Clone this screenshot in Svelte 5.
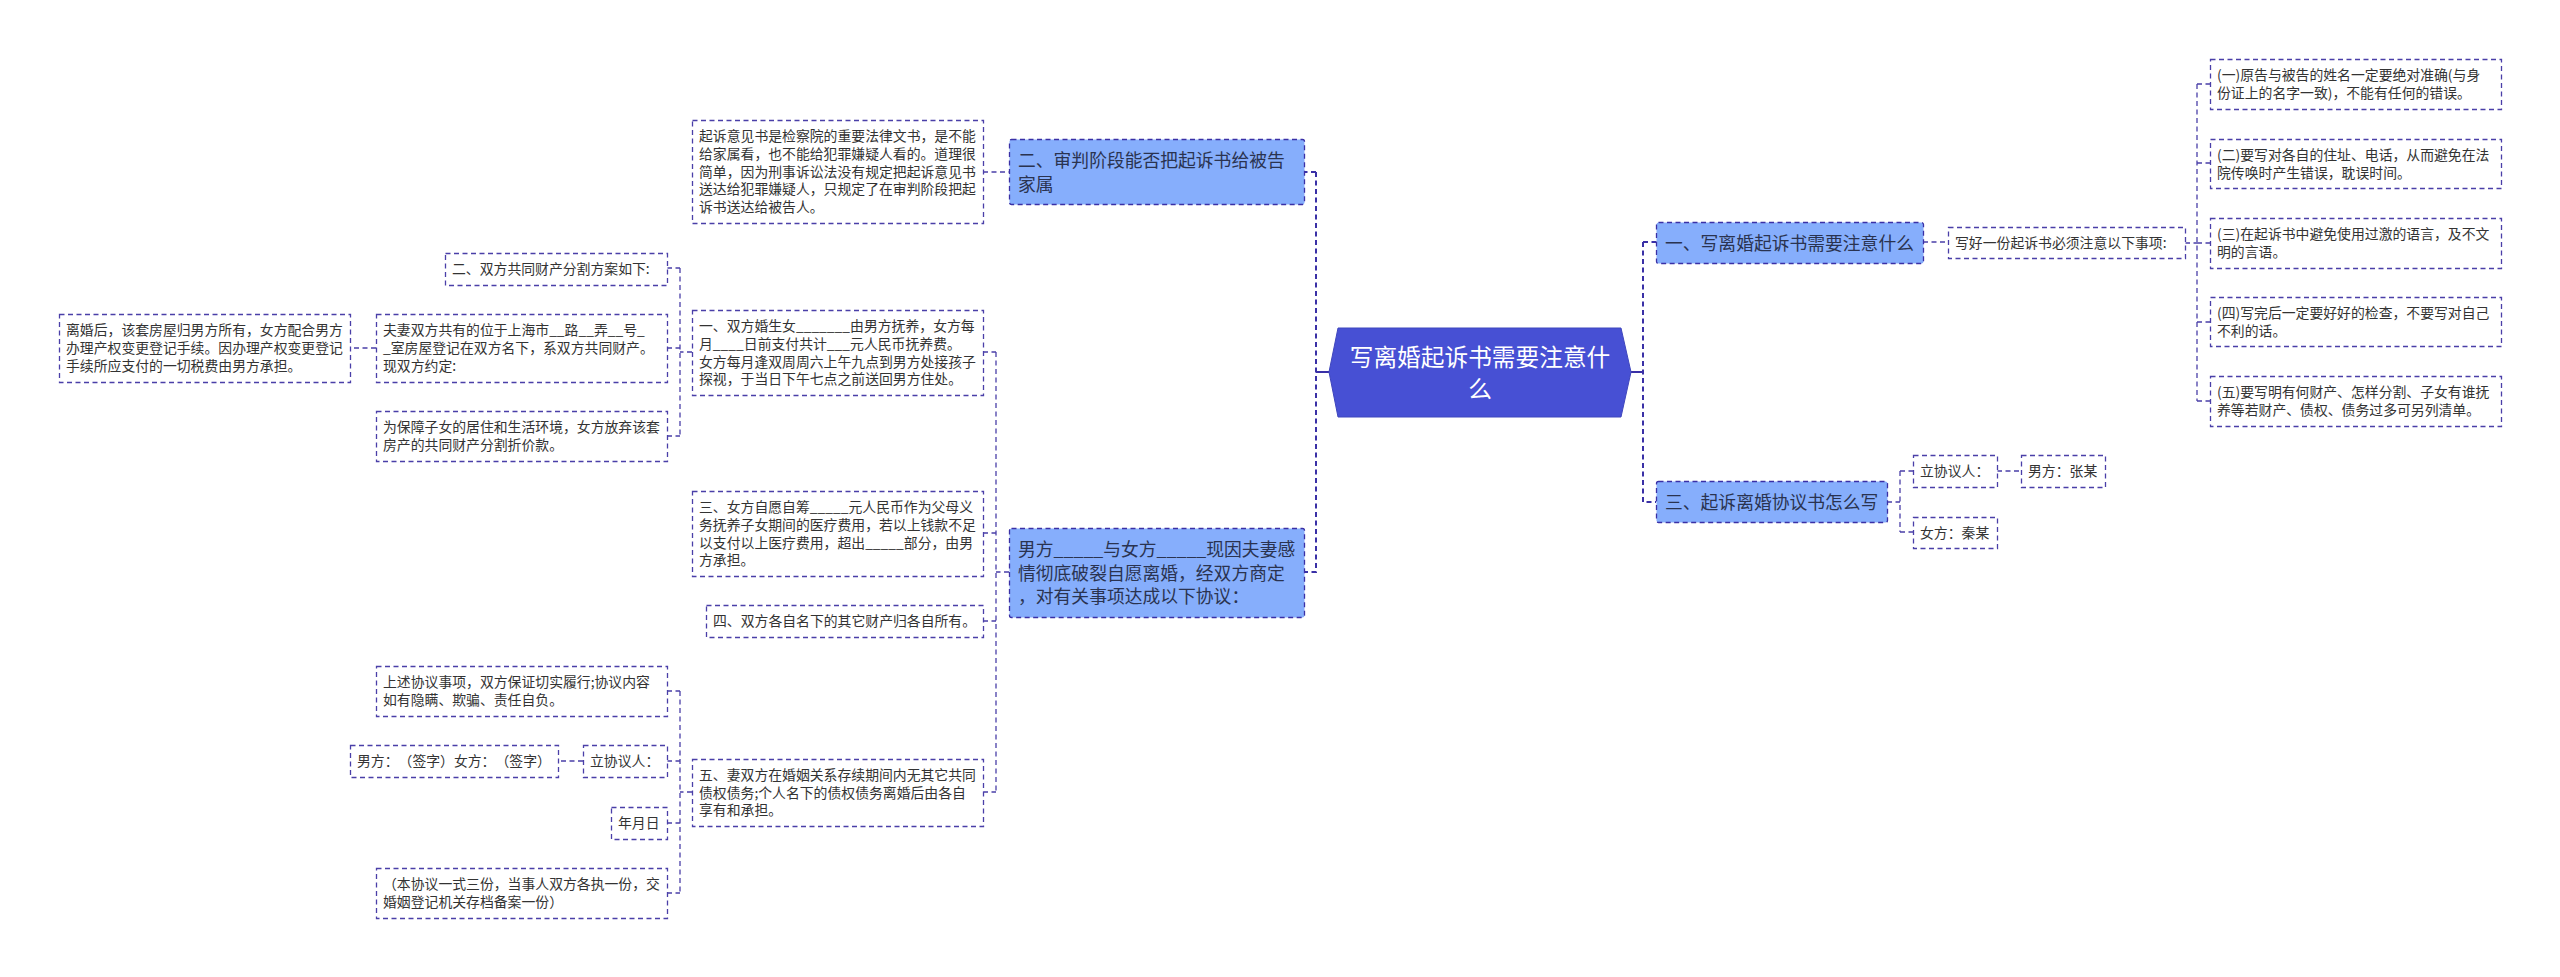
<script>
  // x, y, w, h in canvas pixels; kind picks the look
  const nodes = [
    { x: 1329, y: 328, w: 302, h: 89, kind: 'root', text: '写离婚起诉书需要注意什\n么' },

    { x: 1009, y: 139, w: 295, h: 65, kind: 'topic', text: '二、审判阶段能否把起诉书给被告\n家属' },
    { x: 1009, y: 528, w: 295, h: 89, kind: 'topic', text: '男方_____与女方_____现因夫妻感\n情彻底破裂自愿离婚，经双方商定\n，对有关事项达成以下协议：' },
    { x: 1656, y: 222, w: 267, h: 41, kind: 'topic', text: '一、写离婚起诉书需要注意什么' },
    { x: 1656, y: 481, w: 231, h: 41, kind: 'topic', text: '三、起诉离婚协议书怎么写' },

    { x: 692, y: 120, w: 291, h: 103, kind: 'leaf', text: '起诉意见书是检察院的重要法律文书，是不能\n给家属看，也不能给犯罪嫌疑人看的。道理很\n简单，因为刑事诉讼法没有规定把起诉意见书\n送达给犯罪嫌疑人，只规定了在审判阶段把起\n诉书送达给被告人。' },
    { x: 692, y: 310, w: 291, h: 85, kind: 'leaf', text: '一、双方婚生女_______由男方抚养，女方每\n月____日前支付共计___元人民币抚养费。\n女方每月逢双周周六上午九点到男方处接孩子\n探视，于当日下午七点之前送回男方住处。' },
    { x: 692, y: 491, w: 291, h: 85, kind: 'leaf', text: '三、女方自愿自筹_____元人民币作为父母义\n务抚养子女期间的医疗费用，若以上钱款不足\n以支付以上医疗费用，超出_____部分，由男\n方承担。' },
    { x: 706, y: 605, w: 277, h: 32, kind: 'leaf', text: '四、双方各自名下的其它财产归各自所有。' },
    { x: 692, y: 759, w: 291, h: 67, kind: 'leaf', text: '五、妻双方在婚姻关系存续期间内无其它共同\n债权债务;个人名下的债权债务离婚后由各自\n享有和承担。' },

    { x: 445, y: 253, w: 222, h: 32, kind: 'leaf', text: '二、双方共同财产分割方案如下:' },
    { x: 376, y: 314, w: 291, h: 68, kind: 'leaf', text: '夫妻双方共有的位于上海市__路__弄__号_\n_室房屋登记在双方名下，系双方共同财产。\n现双方约定:' },
    { x: 376, y: 411, w: 291, h: 50, kind: 'leaf', text: '为保障子女的居住和生活环境，女方放弃该套\n房产的共同财产分割折价款。' },
    { x: 59, y: 314, w: 291, h: 68, kind: 'leaf', text: '离婚后，该套房屋归男方所有，女方配合男方\n办理产权变更登记手续。因办理产权变更登记\n手续所应支付的一切税费由男方承担。' },

    { x: 376, y: 666, w: 291, h: 50, kind: 'leaf', text: '上述协议事项，双方保证切实履行;协议内容\n如有隐瞒、欺骗、责任自负。' },
    { x: 583, y: 745, w: 84, h: 32, kind: 'leaf', text: '立协议人：' },
    { x: 350, y: 745, w: 208, h: 32, kind: 'leaf', text: '男方：（签字）女方：（签字）' },
    { x: 611, y: 807, w: 56, h: 32, kind: 'leaf', text: '年月日' },
    { x: 376, y: 868, w: 291, h: 50, kind: 'leaf', text: '（本协议一式三份，当事人双方各执一份，交\n婚姻登记机关存档备案一份）' },

    { x: 1948, y: 227, w: 237, h: 31, kind: 'leaf', text: '写好一份起诉书必须注意以下事项:' },
    { x: 2210, y: 59, w: 291, h: 50, kind: 'leaf', text: '(一)原告与被告的姓名一定要绝对准确(与身\n份证上的名字一致)，不能有任何的错误。' },
    { x: 2210, y: 139, w: 291, h: 49, kind: 'leaf', text: '(二)要写对各自的住址、电话，从而避免在法\n院传唤时产生错误，耽误时间。' },
    { x: 2210, y: 218, w: 291, h: 50, kind: 'leaf', text: '(三)在起诉书中避免使用过激的语言，及不文\n明的言语。' },
    { x: 2210, y: 297, w: 291, h: 49, kind: 'leaf', text: '(四)写完后一定要好好的检查，不要写对自己\n不利的话。' },
    { x: 2210, y: 376, w: 291, h: 50, kind: 'leaf', text: '(五)要写明有何财产、怎样分割、子女有谁抚\n养等若财产、债权、债务过多可另列清单。' },

    { x: 1913, y: 455, w: 84, h: 32, kind: 'leaf', text: '立协议人：' },
    { x: 2021, y: 455, w: 84, h: 32, kind: 'leaf', text: '男方：张某' },
    { x: 1913, y: 517, w: 84, h: 31, kind: 'leaf', text: '女方：秦某' }
  ];

  const outlined = nodes.filter((n) => n.kind !== 'root');

  const root = nodes[0];
  const rootPoints = [
    [root.x + 9, root.y],
    [root.x + 292, root.y],
    [root.x + 302, root.y + 44],
    [root.x + 292, root.y + 89],
    [root.x + 9, root.y + 89],
    [root.x, root.y + 44]
  ].join(' ');

  const trunks = [
    'M1316 172H1304M1316 172V572H1304',
    'M1643 242H1656M1643 242V502H1656'
  ];

  const links = [
    'M983 172H1009',
    'M1009 572H996M996 352V792M983 352H996M983 533H996M983 621H996M983 792H996',
    'M692 352H680M680 268V436M667 268H680M667 348H680M667 436H680',
    'M376 348H350',
    'M692 792H680M680 691V893M667 691H680M667 761H680M667 823H680M667 893H680',
    'M583 761H558',
    'M1923 242H1948',
    'M2185 243H2197M2197 84V401M2197 84H2210M2197 163H2210M2197 243H2210M2197 322H2210M2197 401H2210',
    'M1887 502H1900M1900 471V532M1900 471H1913M1900 532H1913',
    'M1997 471H2021'
  ];
</script>

<main class="canvas">
  <svg class="wires" width="2560" height="977" viewBox="0 0 2560 977">
    {#each links as d}
      <path class="link" {d} />
    {/each}
    {#each trunks as d}
      <path class="trunk" {d} />
    {/each}
    <path class="stem" d="M1316 372H1329M1631 372H1643" />
    <polygon class="root-shape" points={rootPoints} />
    {#each outlined as n}
      <rect class={n.kind} x={n.x + 0.5} y={n.y + 0.5} width={n.w} height={n.h} rx={n.kind === 'topic' ? 2 : 0} />
    {/each}
  </svg>

  {#each nodes as n}
    <div class="node {n.kind}" style="left:{n.x}px;top:{n.y}px;width:{n.w}px;height:{n.h}px">{n.text}</div>
  {/each}
</main>

<style>
  :global(body) {
    background: #fff;
  }
  .canvas {
    position: relative;
    width: 2560px;
    height: 977px;
    overflow: hidden;
    font-family: "Noto Sans CJK SC", "Noto Sans", sans-serif;
  }
  .wires {
    position: absolute;
    left: 0;
    top: 0;
  }
  .link {
    fill: none;
    stroke: #4a3fa8;
    stroke-width: 1.3;
    stroke-dasharray: 5 3.5;
  }
  .trunk {
    fill: none;
    stroke: #3a30a6;
    stroke-width: 2;
    stroke-dasharray: 5 3.5;
  }
  .stem {
    fill: none;
    stroke: #3a30a6;
    stroke-width: 2;
  }
  .root-shape {
    fill: #4750d4;
    stroke: #3f46bd;
    stroke-width: 1;
  }
  rect.leaf {
    fill: #fff;
    stroke: #4a3fa8;
    stroke-width: 1.3;
    stroke-dasharray: 5 3.5;
  }
  rect.topic {
    fill: #86aefc;
    stroke: #3a30a6;
    stroke-width: 1.3;
    stroke-dasharray: 5 3.5;
  }
  .node {
    position: absolute;
    box-sizing: border-box;
    display: flex;
    align-items: center;
    white-space: pre;
    text-spacing-trim: space-all;
    font-feature-settings: "palt" 0;
  }
  .leaf {
    padding-left: 7px;
    font-size: 13.85px;
    line-height: 17.8px;
    color: #333;
  }
  .topic {
    padding-left: 9px;
    font-size: 17.8px;
    line-height: 23.7px;
    color: #2a3350;
  }
  .root {
    justify-content: center;
    text-align: center;
    font-size: 23.7px;
    line-height: 31.7px;
    color: #fff;
  }
</style>
